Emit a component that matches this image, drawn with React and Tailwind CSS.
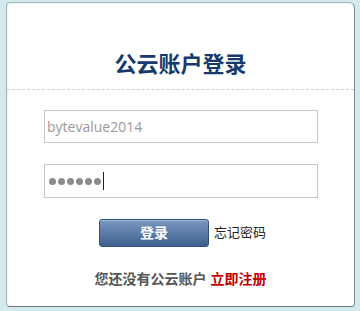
import React from "react";

const cjk = "font-['Liberation_Sans','Noto_Sans_CJK_SC',sans-serif]";

const App = () => {
  return (
    <div className={`w-[360px] h-[311px] bg-[#d3e9eb] pt-[2px] pl-[6px] ${cjk}`}>
      <div className="w-[349px] h-[305px] bg-white border border-[#a3b8bc] border-r-[#7d8e93] border-b-[#66777d] rounded-[4px] rounded-tr-[6px] shadow-[inset_1px_1px_0_#eef6f7]">
        {/* header */}
        <div className="h-[87px] flex items-end justify-center pb-[11px] border-b border-dashed border-[#cfcfcf]">
          <h1 className="text-[22px] leading-[26px] font-bold text-[#173a6b]">
            公云账户登录
          </h1>
        </div>

        {/* form */}
        <div className="pl-[37px] pt-[20px]">
          <div className="w-[274px] h-[33px] border border-[#c6c6c6] flex items-center px-[2px]">
            <span className="font-['Open_Sans',sans-serif] text-[14px] text-[#9a9a9a]">
              bytevalue2014
            </span>
          </div>

          <div className="mt-[21px] w-[274px] h-[34px] border border-[#c6c6c6] flex items-center pl-[4px]">
            <div className="flex gap-[2px]">
              {[0, 1, 2, 3, 4, 5].map((i) => (
                <span key={i} className="w-[7px] h-[7px] rounded-full bg-[#8c8c8c]" />
              ))}
            </div>
            <span className="ml-[2px] w-px h-[18px] bg-[#222]" />
          </div>

          <div className="mt-[21px] flex items-center pl-[55px]">
            <button className="w-[110px] h-[28px] rounded-[3px] border border-[#34507c] bg-gradient-to-b from-[#7a98c0] to-[#3f5f8f] text-white text-[14px] font-bold shadow-[inset_0_1px_0_#9fb6d4]">
              登录
            </button>
            <span className="ml-[5px] text-[13px] text-[#222]">忘记密码</span>
          </div>
        </div>

        <div className="mt-[23px] text-center text-[14px] font-bold leading-[18px]">
          <span className="text-[#555]">您还没有公云账户</span>
          <span className="ml-[4px] text-[#c00000]">立即注册</span>
        </div>
      </div>
    </div>
  );
};

export default App;
